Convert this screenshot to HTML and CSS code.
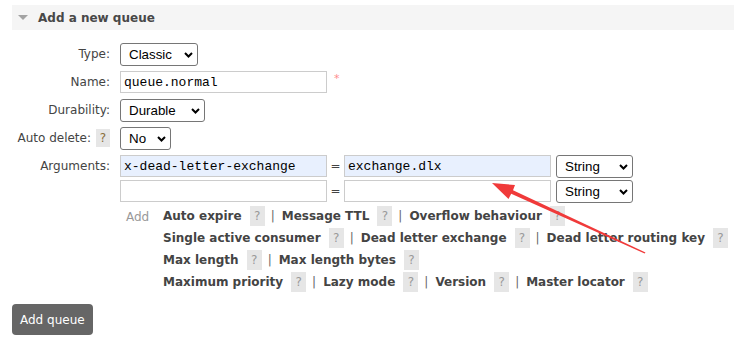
FILE: index.html
```html
<!DOCTYPE html>
<html lang="en">
<head>
    <meta charset="UTF-8">
    <meta name="viewport" content="width=device-width, initial-scale=1.0">
    <title>Add a new queue</title>
    <link rel="stylesheet" href="styles.css">
</head>
<body>
    <div class="page">
        <div class="section">
            <h2 class="section-head"><span class="toggle"></span>Add a new queue</h2>
            <form class="queue-form">
                <div class="form-grid">
                    <label class="field-label">Type:</label>
                    <div class="field">
                        <span class="select-wrap w-type">
                            <select name="queuetype"><option>Classic</option></select>
                            <svg class="chevron" width="9" height="6" viewBox="0 0 9 6"><path d="M1 1 L4.5 4.5 L8 1" fill="none" stroke="#000" stroke-width="2"/></svg>
                        </span>
                    </div>

                    <label class="field-label">Name:</label>
                    <div class="field">
                        <input type="text" class="text-input" name="name" value="queue.normal">
                        <span class="mand">*</span>
                    </div>

                    <label class="field-label">Durability:</label>
                    <div class="field">
                        <span class="select-wrap w-durable">
                            <select name="durable"><option>Durable</option></select>
                            <svg class="chevron" width="9" height="6" viewBox="0 0 9 6"><path d="M1 1 L4.5 4.5 L8 1" fill="none" stroke="#000" stroke-width="2"/></svg>
                        </span>
                    </div>

                    <label class="field-label">Auto delete: <span class="help help-small">?</span></label>
                    <div class="field">
                        <span class="select-wrap w-no">
                            <select name="auto_delete"><option>No</option></select>
                            <svg class="chevron" width="9" height="6" viewBox="0 0 9 6"><path d="M1 1 L4.5 4.5 L8 1" fill="none" stroke="#000" stroke-width="2"/></svg>
                        </span>
                    </div>

                    <label class="field-label args-label">Arguments:</label>
                    <div class="field args">
                        <div class="arg-row">
                            <input type="text" class="text-input filled" value="x-dead-letter-exchange">
                            <span class="eq">=</span>
                            <input type="text" class="text-input filled" value="exchange.dlx">
                            <span class="select-wrap w-string">
                                <select><option>String</option></select>
                                <svg class="chevron" width="9" height="6" viewBox="0 0 9 6"><path d="M1 1 L4.5 4.5 L8 1" fill="none" stroke="#000" stroke-width="2"/></svg>
                            </span>
                        </div>
                        <div class="arg-row">
                            <input type="text" class="text-input" value="">
                            <span class="eq">=</span>
                            <input type="text" class="text-input" value="">
                            <span class="select-wrap w-string">
                                <select><option>String</option></select>
                                <svg class="chevron" width="9" height="6" viewBox="0 0 9 6"><path d="M1 1 L4.5 4.5 L8 1" fill="none" stroke="#000" stroke-width="2"/></svg>
                            </span>
                        </div>
                        <div class="arg-links">
                            <span class="add-label">Add</span>
                            <div class="link-lines">
                                <div class="link-line">
                                    <span class="arg-link">Auto expire</span><span class="help">?</span><span class="sep">|</span>
                                    <span class="arg-link">Message TTL</span><span class="help">?</span><span class="sep">|</span>
                                    <span class="arg-link">Overflow behaviour</span><span class="help">?</span>
                                </div>
                                <div class="link-line">
                                    <span class="arg-link">Single active consumer</span><span class="help">?</span><span class="sep">|</span>
                                    <span class="arg-link">Dead letter exchange</span><span class="help">?</span><span class="sep">|</span>
                                    <span class="arg-link">Dead letter routing key</span><span class="help">?</span>
                                </div>
                                <div class="link-line">
                                    <span class="arg-link">Max length</span><span class="help">?</span><span class="sep">|</span>
                                    <span class="arg-link">Max length bytes</span><span class="help">?</span>
                                </div>
                                <div class="link-line">
                                    <span class="arg-link">Maximum priority</span><span class="help">?</span><span class="sep">|</span>
                                    <span class="arg-link">Lazy mode</span><span class="help">?</span><span class="sep">|</span>
                                    <span class="arg-link">Version</span><span class="help">?</span><span class="sep">|</span>
                                    <span class="arg-link">Master locator</span><span class="help">?</span>
                                </div>
                            </div>
                        </div>
                    </div>
                </div>
                <button type="submit" class="btn">Add queue</button>
            </form>
        </div>

        <!-- red annotation arrow drawn over the screenshot -->
        <svg class="annotation" width="734" height="347" viewBox="0 0 734 347">
            <polygon points="492,183 515,185 513,190.3 645.5,252.6 644.6,253.4 511.2,193.8 508.5,199" fill="#f03a3a"/>
        </svg>
    </div>
</body>
</html>
```

FILE: styles.css
```css
body {
    margin: 0;
    padding: 0;
    font-family: "DejaVu Sans", Verdana, sans-serif;
    font-size: 12px;
    color: #444;
    background-color: #fff;
}
.page {
    position: relative;
    width: 734px;
    height: 347px;
    overflow: hidden;
}
.section {
    padding: 5px 0 0 12px;
}
.section-head {
    display: flex;
    align-items: center;
    height: 25px;
    margin: 0 0 10px;
    padding-left: 6px;
    background-color: #f5f5f5;
    font-size: 12px;
    font-weight: bold;
    color: #484848;
}
.toggle {
    width: 0;
    height: 0;
    margin-right: 10px;
    border-left: 5px solid transparent;
    border-right: 5px solid transparent;
    border-top: 5px solid #a3a3a3;
}
.form-grid {
    display: grid;
    grid-template-columns: 98px 1fr;
    grid-auto-rows: 28px;
    column-gap: 10px;
}
.field-label {
    display: flex;
    align-items: center;
    justify-content: flex-end;
    white-space: nowrap;
}
.field {
    display: flex;
    align-items: center;
}
.args-label {
    align-items: flex-start;
    padding-top: 3px;
    line-height: 23px;
}
.args {
    flex-direction: column;
    align-items: flex-start;
    padding-top: 3px;
    grid-row: span 5;
}
.select-wrap {
    position: relative;
    display: inline-block;
    height: 23px;
}
.select-wrap select {
    appearance: none;
    -webkit-appearance: none;
    width: 100%;
    height: 23px;
    margin: 0;
    padding: 0 0 0 8px;
    border: 1px solid #767676;
    border-radius: 3px;
    background-color: #fff;
    font-family: "Liberation Sans", Arial, sans-serif;
    font-size: 13.33px;
    color: #000;
}
.chevron {
    position: absolute;
    right: 5px;
    top: 9px;
    pointer-events: none;
}
.w-type { width: 78px; }
.w-durable { width: 85px; }
.w-no { width: 51px; }
.w-string { width: 77px; margin-left: 5px; }
.text-input {
    box-sizing: border-box;
    width: 207px;
    height: 22px;
    margin: 0;
    padding: 0 3px;
    border: 1px solid #ccc;
    font-family: "Liberation Mono", "Courier New", monospace;
    font-size: 13px;
    color: #000;
    background-color: #fff;
}
.text-input.filled {
    background-color: #e8f0fe;
}
.mand {
    align-self: flex-start;
    margin: 5px 0 0 7px;
    font-size: 11px;
    line-height: 11px;
    color: #ff8c8c;
}
.arg-row {
    display: flex;
    align-items: flex-start;
    margin-bottom: 2px;
}
.eq {
    width: 17px;
    line-height: 22px;
    text-align: center;
}
.arg-links {
    display: flex;
}
.add-label {
    width: 37px;
    padding: 5px 0 0 6px;
    line-height: 14px;
    color: #999;
}
.link-line {
    display: flex;
    align-items: center;
    height: 22px;
    white-space: nowrap;
}
.arg-link {
    font-weight: bold;
    color: #444;
}
.help {
    display: inline-block;
    width: 15px;
    height: 20px;
    margin-left: 8px;
    line-height: 20px;
    text-align: center;
    background-color: #e6e6e6;
    color: #999;
    font-weight: normal;
}
.help-small {
    width: 14px;
    height: 18px;
    margin-left: 5px;
    line-height: 18px;
    color: #8a6d3b;
}
.sep {
    margin: 0 7px 0 6px;
    color: #666;
}
.btn {
    height: 31px;
    margin-top: 12px;
    padding: 0 8px;
    border: none;
    border-radius: 4px;
    background-color: #666;
    color: #fff;
    font-family: "DejaVu Sans", Verdana, sans-serif;
    font-size: 12px;
    cursor: pointer;
}
.annotation {
    position: absolute;
    left: 0;
    top: 0;
    pointer-events: none;
}
```
